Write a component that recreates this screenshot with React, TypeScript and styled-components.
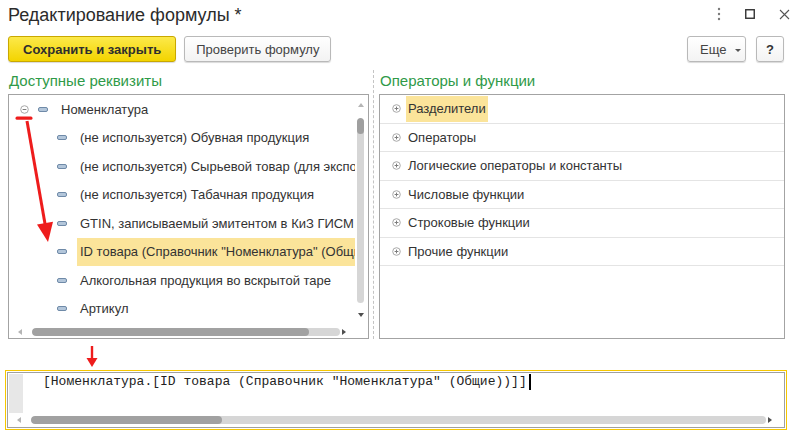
import React from "react";
import styled, { createGlobalStyle } from "styled-components";

const GlobalStyle = createGlobalStyle`
  html, body {
    margin: 0;
    padding: 0;
    background: #ffffff;
  }
  body {
    font-family: "Liberation Sans", Arial, sans-serif;
    color: #333333;
  }
  * {
    box-sizing: border-box;
  }
`;

const attributes = [
  { level: 0, text: "Номенклатура", open: true },
  { level: 1, text: "(не используется) Обувная продукция" },
  { level: 1, text: "(не используется) Сырьевой товар (для экспорта)" },
  { level: 1, text: "(не используется) Табачная продукция" },
  { level: 1, text: "GTIN, записываемый эмитентом в КиЗ ГИСМ" },
  { level: 1, text: 'ID товара (Справочник "Номенклатура" (Общие))', selected: true },
  { level: 1, text: "Алкогольная продукция во вскрытой таре" },
  { level: 1, text: "Артикул" },
];

const groups = [
  { text: "Разделители", selected: true },
  { text: "Операторы" },
  { text: "Логические операторы и константы" },
  { text: "Числовые функции" },
  { text: "Строковые функции" },
  { text: "Прочие функции" },
];

const formula = '[Номенклатура.[ID товара (Справочник "Номенклатура" (Общие))]]';

const Toggle = ({ open }: { open?: boolean }) => (
  <ToggleSvg width="9" height="9" viewBox="0 0 9 9">
    <circle cx="4.5" cy="4.5" r="3.8" fill="#ffffff" stroke="#a8a8a8" strokeWidth="1" />
    <path d="M2.6 4.5h3.8" stroke="#7d7d7d" strokeWidth="1" />
    {!open && <path d="M4.5 2.6v3.8" stroke="#7d7d7d" strokeWidth="1" />}
  </ToggleSvg>
);

const HScroll = ({ thumb, inset }: { thumb: number; inset: number }) => (
  <HScrollBar $inset={inset}>
    <ArrowLeft />
    <HTrack>
      <HThumb style={{ width: `${thumb}%` }} />
    </HTrack>
    <ArrowRight />
  </HScrollBar>
);

export default function App() {
  return (
    <Window>
      <GlobalStyle />
      <TitleBar>
        <Title>Редактирование формулы *</Title>
        <WindowControls>
          <svg width="4" height="14" viewBox="0 0 4 14">
            <circle cx="2" cy="2" r="1.2" fill="#7a7a7a" />
            <circle cx="2" cy="7" r="1.2" fill="#7a7a7a" />
            <circle cx="2" cy="12" r="1.2" fill="#7a7a7a" />
          </svg>
          <svg width="10" height="10" viewBox="0 0 10 10">
            <rect x="0.75" y="0.75" width="8.5" height="8.5" fill="none" stroke="#333" strokeWidth="1.4" />
          </svg>
          <svg width="11" height="11" viewBox="0 0 11 11">
            <path d="M1 1L10 10M10 1L1 10" stroke="#555" strokeWidth="1.1" />
          </svg>
        </WindowControls>
      </TitleBar>

      <Toolbar>
        <ButtonGroup>
          <Button $primary>Сохранить и закрыть</Button>
          <Button>Проверить формулу</Button>
        </ButtonGroup>
        <ButtonGroup $gap={10}>
          <MoreButton>
            Еще <Caret />
          </MoreButton>
          <HelpButton>?</HelpButton>
        </ButtonGroup>
      </Toolbar>

      <Columns>
        <Column>
          <SectionLabel>Доступные реквизиты</SectionLabel>
          <TreePanel>
            <TreeArea>
              {attributes.map((a, i) => (
                <TreeRow key={i} $level={a.level}>
                  {a.level === 0 && (
                    <ToggleSlot>
                      <Toggle open={a.open} />
                    </ToggleSlot>
                  )}
                  <AttrIcon />
                  <NodeLabel $selected={a.selected}>{a.text}</NodeLabel>
                </TreeRow>
              ))}
            </TreeArea>
            <VScrollBar>
              <ArrowUp />
              <VTrack>
                <VThumb />
              </VTrack>
              <ArrowDown />
            </VScrollBar>
            <HScroll thumb={90} inset={9} />
          </TreePanel>
        </Column>

        <Divider />

        <Column>
          <SectionLabel>Операторы и функции</SectionLabel>
          <GroupPanel>
            {groups.map((g, i) => (
              <GroupRow key={i}>
                <Toggle />
                <GroupLabel $selected={g.selected}>{g.text}</GroupLabel>
              </GroupRow>
            ))}
          </GroupPanel>
        </Column>
      </Columns>

      <ArrowRow>
        <svg width="12" height="24" viewBox="0 0 12 24">
          <path d="M6 2V15" stroke="#ee1c1c" strokeWidth="2.4" />
          <path d="M0.5 14H11.5L6 23Z" fill="#ee1c1c" />
        </svg>
      </ArrowRow>

      <FormulaFrame>
        <FormulaBox>
          <Gutter />
          <FormulaText>
            {formula}
            <TextCursor />
          </FormulaText>
          <FormulaScroll>
            <HScroll thumb={26} inset={9} />
          </FormulaScroll>
        </FormulaBox>
      </FormulaFrame>

      <Annotation width="799" height="436" viewBox="0 0 799 436">
        <rect x="15.5" y="116.5" width="17" height="3.2" rx="1.5" fill="#ee1c1c" />
        <path d="M27 121L45.4 226" stroke="#ee1c1c" strokeWidth="3" />
        <path d="M48 242L37 224.5L53 221.8Z" fill="#ee1c1c" />
      </Annotation>
    </Window>
  );
}

const Window = styled.div`
  position: relative;
  width: 799px;
  height: 436px;
  overflow: hidden;
  background: #ffffff;
  display: flex;
  flex-direction: column;
`;

const TitleBar = styled.div`
  height: 36px;
  padding: 4px 9px 0 8px;
  display: flex;
  justify-content: space-between;
  align-items: flex-start;
`;

const Title = styled.div`
  font-size: 18px;
  line-height: 22px;
  color: #2b2b2b;
  white-space: nowrap;
`;

const WindowControls = styled.div`
  display: flex;
  align-items: center;
  gap: 24px;
  height: 20px;

  svg {
    display: block;
  }
`;

const Toolbar = styled.div`
  height: 26px;
  padding: 0 15px 0 8px;
  display: flex;
  justify-content: space-between;
  align-items: center;
`;

const ButtonGroup = styled.div<{ $gap?: number }>`
  display: flex;
  gap: ${(p) => p.$gap ?? 8}px;
`;

const Button = styled.button<{ $primary?: boolean }>`
  height: 26px;
  padding: 0 ${(p) => (p.$primary ? 14 : 11)}px;
  font-family: "Liberation Sans", Arial, sans-serif;
  font-size: 13px;
  font-weight: ${(p) => (p.$primary ? 700 : 400)};
  color: ${(p) => (p.$primary ? "#2e2e2e" : "#444444")};
  border-radius: 3px;
  border: 1px solid ${(p) => (p.$primary ? "#c9a800" : "#b9b9b9")};
  background: ${(p) =>
    p.$primary
      ? "linear-gradient(#fce94a, #f3d400)"
      : "linear-gradient(#ffffff, #f3f3f3)"};
  box-shadow: 0 1px 1px rgba(0, 0, 0, 0.15);
  white-space: nowrap;
`;

const MoreButton = styled(Button)`
  width: 59px;
  padding: 0 0 0 12px;
  display: flex;
  align-items: center;
  gap: 9px;
`;

const Caret = styled.span`
  width: 0;
  height: 0;
  border-left: 3px solid transparent;
  border-right: 3px solid transparent;
  border-top: 3px solid #555555;
  margin-top: 2px;
`;

const HelpButton = styled(Button)`
  width: 28px;
  padding: 0;
  font-weight: 700;
  color: #333333;
`;

const Columns = styled.div`
  margin-top: 8px;
  padding: 0 14px 0 8px;
  display: grid;
  grid-template-columns: 361px 10px 406px;
`;

const Column = styled.div`
  display: flex;
  flex-direction: column;
`;

const SectionLabel = styled.div`
  height: 24px;
  padding: 2px 0 0 1px;
  font-size: 15px;
  line-height: 18px;
  color: #2f9a48;
  white-space: nowrap;
`;

const Divider = styled.div`
  margin-left: 4px;
  border-left: 1px dashed #c4c4c4;
`;

const TreePanel = styled.div`
  height: 245px;
  border: 1px solid #a3a3a3;
  display: grid;
  grid-template-columns: 1fr 13px;
  grid-template-rows: 1fr 13px;
`;

const TreeArea = styled.div`
  overflow: hidden;
  min-width: 0;
`;

const TreeRow = styled.div<{ $level: number }>`
  height: 28.5px;
  padding-left: ${(p) => (p.$level === 0 ? 11 : 48)}px;
  display: flex;
  align-items: center;
  white-space: nowrap;
`;

const ToggleSlot = styled.span`
  width: 18px;
  display: flex;
  align-items: center;
`;

const ToggleSvg = styled.svg`
  display: block;
  flex: none;
`;

const AttrIcon = styled.span`
  flex: none;
  width: 10px;
  height: 5px;
  margin-right: 10px;
  border-radius: 2px;
  border: 1px solid #6f8aa8;
  background: #b3c6da;
`;

const NodeLabel = styled.span<{ $selected?: boolean }>`
  flex: none;
  height: 28px;
  padding: 0 3px;
  display: flex;
  align-items: center;
  font-size: 13px;
  color: #333333;
  background: ${(p) => (p.$selected ? "#fbe49a" : "transparent")};
`;

const VScrollBar = styled.div`
  padding: 8px 0;
  display: flex;
  flex-direction: column;
  align-items: center;
  justify-content: space-between;
`;

const VTrack = styled.div`
  width: 7px;
  height: 185px;
  margin-left: -2px;
  border-radius: 4px;
  background: #d6d6d6;
  overflow: hidden;
`;

const VThumb = styled.div`
  height: 16px;
  border-radius: 4px;
  background: #9f9f9f;
`;

const ArrowUp = styled.span`
  margin-left: -2px;
  border-left: 3px solid transparent;
  border-right: 3px solid transparent;
  border-bottom: 4px solid #b5b5b5;
`;

const ArrowDown = styled.span`
  margin-left: -2px;
  border-left: 3px solid transparent;
  border-right: 3px solid transparent;
  border-top: 4px solid #4f4f4f;
`;

const HScrollBar = styled.div<{ $inset: number }>`
  height: 100%;
  padding: 0 ${(p) => p.$inset}px;
  display: flex;
  align-items: center;
  gap: 10px;
`;

const HTrack = styled.div`
  flex: 1;
  height: 8px;
  border-radius: 4px;
  background: #d6d6d6;
  overflow: hidden;
  margin-right: -8px;
`;

const HThumb = styled.div`
  height: 100%;
  border-radius: 4px;
  background: #a1a1a1;
`;

const ArrowLeft = styled.span`
  border-top: 3px solid transparent;
  border-bottom: 3px solid transparent;
  border-right: 4px solid #b5b5b5;
`;

const ArrowRight = styled.span`
  border-top: 3px solid transparent;
  border-bottom: 3px solid transparent;
  border-left: 4px solid #4f4f4f;
`;

const GroupPanel = styled.div`
  height: 245px;
  border: 1px solid #a3a3a3;
`;

const GroupRow = styled.div`
  height: 28.5px;
  padding-left: 12px;
  border-bottom: 1px solid #e4e4e4;
  display: flex;
  align-items: center;
  gap: 5px;
  white-space: nowrap;
`;

const GroupLabel = styled.span<{ $selected?: boolean }>`
  height: 26px;
  padding: 0 2px;
  display: flex;
  align-items: center;
  font-size: 13px;
  color: #333333;
  background: ${(p) => (p.$selected ? "#fbe49a" : "transparent")};
`;

const ArrowRow = styled.div`
  height: 31px;
  padding: 5px 0 0 86px;

  svg {
    display: block;
  }
`;

const FormulaFrame = styled.div`
  width: 782px;
  height: 60px;
  margin-left: 5px;
  padding: 1px;
  border: 1px solid #f6c700;
`;

const FormulaBox = styled.div`
  height: 100%;
  border: 1px solid #a0a0a0;
  display: grid;
  grid-template-columns: 15px 1fr;
  grid-template-rows: 40px 1fr;
`;

const Gutter = styled.div`
  margin: 1px 0 0 1px;
  background-color: #f0f0f0;
  background-image: radial-gradient(#dcdcdc 0.6px, transparent 0.8px);
  background-size: 2px 2px;
`;

const FormulaText = styled.div`
  padding: 1px 0 0 20px;
  font-family: "Liberation Mono", "Courier New", monospace;
  font-size: 13px;
  line-height: 16px;
  color: #222222;
  white-space: pre;
  display: flex;
  align-items: flex-start;
`;

const TextCursor = styled.span`
  width: 2px;
  height: 16px;
  margin-left: 2px;
  background: #000000;
`;

const FormulaScroll = styled.div`
  grid-column: 1 / 3;
  padding-right: 3px;
`;

const Annotation = styled.svg`
  position: absolute;
  top: 0;
  left: 0;
  pointer-events: none;
`;
